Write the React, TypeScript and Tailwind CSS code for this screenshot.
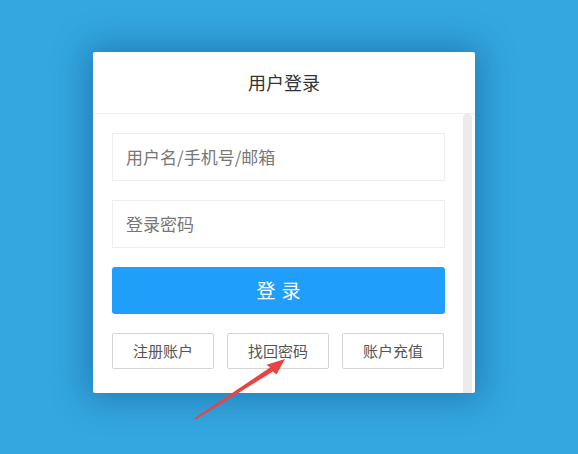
import React from 'react';

const font = { fontFamily: '"Microsoft YaHei", "Noto Sans CJK SC", "Noto Sans", sans-serif' };

const LinkButton = ({ label }: { label: string }) => (
    <button className="h-[36px] w-[102px] rounded-[2px] border border-[#d4d4d4] bg-white text-[15px] text-[#555]">
        {label}
    </button>
);

const App = () => {
    return (
        <div className="relative h-[454px] w-[578px] overflow-hidden bg-[#34a7e0]" style={font}>
            <div className="pl-[93px] pt-[52px]">
                <div className="w-[382px] rounded-[2px] bg-white shadow-[0_0_34px_6px_rgba(10,70,130,0.45)]">
                    {/* header */}
                    <div className="flex h-[62px] items-center justify-center border-b border-[#ececec] text-[18px] text-[#333]">
                        用户登录
                    </div>

                    {/* body with fake scrollbar */}
                    <div className="flex">
                        <div className="flex flex-1 flex-col gap-[19px] pb-[24px] pl-[19px] pr-[18px] pt-[19px]">
                            <div className="flex h-[48px] items-center border border-[#eeeeee] pl-[13px] text-[17px] text-[#777]">
                                用户名/手机号/邮箱
                            </div>
                            <div className="flex h-[48px] items-center border border-[#eeeeee] pl-[13px] text-[17px] text-[#777]">
                                登录密码
                            </div>
                            <button className="h-[47px] rounded-[3px] bg-[#209ffa] pl-[6px] text-[19px] tracking-[6px] text-white">
                                登录
                            </button>
                            <div className="flex justify-between pr-[1px]">
                                <LinkButton label="注册账户" />
                                <LinkButton label="找回密码" />
                                <LinkButton label="账户充值" />
                            </div>
                        </div>
                        <div className="mr-[3px] w-[9px] rounded-t-[4px] bg-[#ebebeb]" />
                    </div>
                </div>
            </div>

            {/* red arrow overlay */}
            <svg className="absolute left-0 top-0" width="578" height="454" viewBox="0 0 578 454">
                <polygon
                    points="194.4,418.3 270.1,367.4 266.5,364.8 285,359 276.5,374.5 272.9,371.6 195.6,419.7"
                    fill="#e94444"
                />
            </svg>
        </div>
    );
};

export default App;
